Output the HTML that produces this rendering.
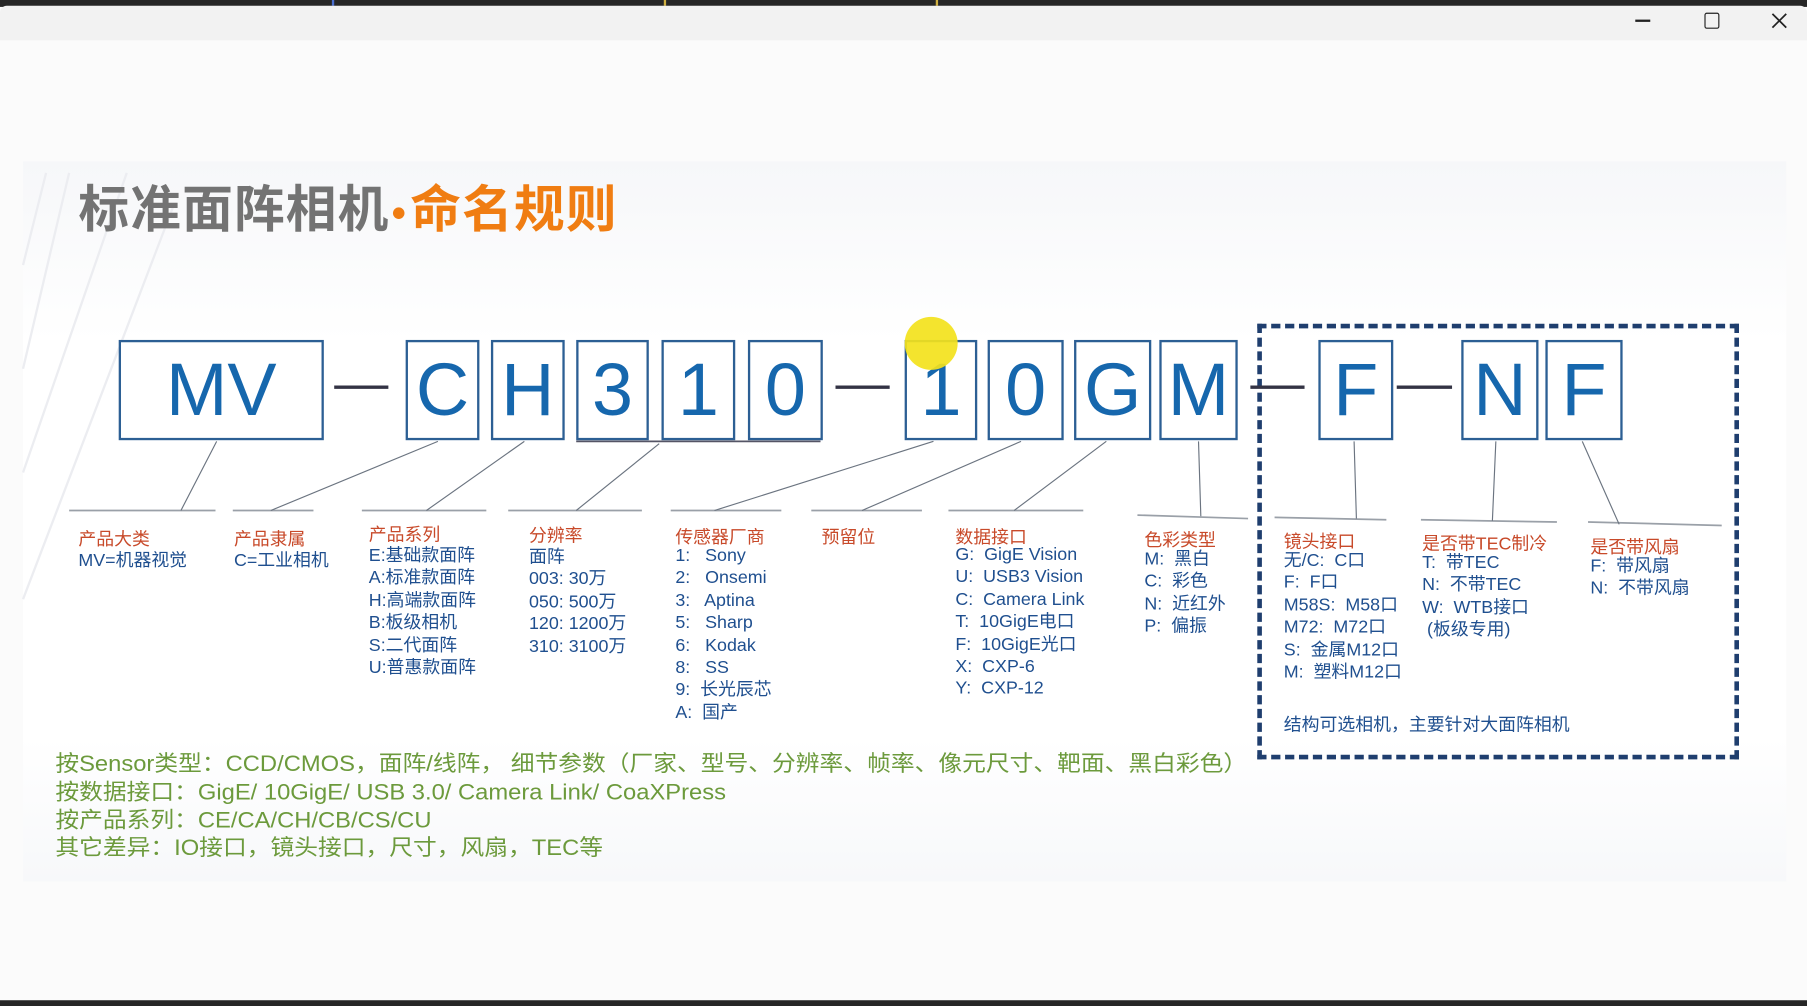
<!DOCTYPE html>
<html><head><meta charset="utf-8"><style>
html,body{margin:0;padding:0;width:1807px;height:1006px;overflow:hidden;background:#fff}
#w{position:absolute;left:0;top:0;width:1568px;height:873px;transform-origin:0 0;transform:scale(1.15242,1.15235);background:#fbfbfb;font-family:"Liberation Sans","Noto Sans CJK SC",sans-serif}
.a{position:absolute;white-space:nowrap}
.t{color:#c84a2a;font-size:15.5px}
.i{color:#1f4f8f;font-size:15.5px;line-height:19.4px}
.g{color:#6c9a3c;font-size:19px;left:48px;transform:scaleX(1.085);transform-origin:0 0}
.bx{position:absolute;top:295px;height:83px;border:2px solid #2c5f94;background:#fff;color:#1667ad;font-size:64px;text-align:center;line-height:83px;box-sizing:content-box}
</style></head><body><div id="w">
<div class="a" style="left:0;top:0;width:1568px;height:6px;background:#262626"></div>
<div class="a" style="left:288px;top:0;width:2px;height:5px;background:#4a6fd0"></div>
<div class="a" style="left:576px;top:0;width:2px;height:5px;background:#d0b040"></div>
<div class="a" style="left:812px;top:0;width:2px;height:5px;background:#d0b040"></div>
<div class="a" style="left:0;top:5px;width:1568px;height:30px;background:#f2f2f2;border-radius:6px 6px 0 0"></div>
<div class="a" style="left:1419px;top:17px;width:13px;height:1.5px;background:#222"></div>
<div class="a" style="left:1479px;top:11px;width:11px;height:12px;border:1.5px solid #222;border-radius:2px"></div>
<svg class="a" style="left:1537px;top:11px" width="14" height="14"><path d="M1 1L13 13M13 1L1 13" stroke="#222" stroke-width="1.5"/></svg>
<div class="a" style="left:20px;top:140px;width:1530px;height:625px;background:linear-gradient(180deg,#f6f7f9 0%,#fff 25%,#fff 80%,#f7f8fa 100%)"></div>
<svg class="a" style="left:0;top:140px" width="1568" height="630">
<path d="M40 10L20 90M60 10L20 180M110 10L20 270M150 40L20 380" stroke="#ecedf1" stroke-width="2" fill="none"/>
</svg>
<div class="a" style="left:68px;top:146px;font-size:44px;font-weight:bold;font-family:'Noto Sans CJK SC',sans-serif;color:#737373;letter-spacing:1px">标准面阵相机<span style="display:inline-block;width:10px;height:10px;border-radius:50%;background:#f07d12;margin:0 5px 0 3px;vertical-align:middle"></span><span style="color:#f07d12">命名规则</span></div>

<div class="a" style="left:1091px;top:281px;width:410px;height:370px;border:4px dashed #1f3e6e"></div>

<div class="bx" style="left:103px;width:174px">MV</div>
<div class="bx" style="left:352px;width:60px">C</div>
<div class="bx" style="left:426px;width:60px">H</div>
<div class="bx" style="left:500px;width:59px">3</div>
<div class="bx" style="left:574px;width:60px">1</div>
<div class="bx" style="left:649px;width:61px">0</div>
<div class="bx" style="left:785px;width:59px">1</div>
<div class="bx" style="left:857px;width:62px">0</div>
<div class="bx" style="left:932px;width:63px">G</div>
<div class="bx" style="left:1006px;width:64px">M</div>
<div class="bx" style="left:1144px;width:61px">F</div>
<div class="bx" style="left:1268px;width:63px">N</div>
<div class="bx" style="left:1341px;width:63px">F</div>
<div class="a" style="left:785px;top:275px;width:46px;height:46px;border-radius:50%;background:#f3e21c;opacity:.92"></div>

<svg class="a" style="left:0;top:0" width="1568" height="873">
<g stroke="#334" stroke-width="3"><path d="M290 336H337M725 336H772M1085 336H1132M1212 336H1260"/></g>
<path d="M500 383H712" stroke="#556" stroke-width="1.5"/>
<g stroke="#9aa0a8" stroke-width="1.5" fill="none">
<path d="M60 443H187M202 443H272M314 443H422M441 443H557M582 443H678M704 443H800M823 443H940M987 447L1083 450M1106 449L1203 451M1233 451L1351 453M1378 453L1494 456"/>
</g>
<g stroke="#6b7480" stroke-width="1" fill="none">
<path d="M188 383L157 443M380 383L235 443M455 383L370 443M572 385L500 443M810 383L620 443M886 383L748 443M960 383L880 443M1040 383L1042 448M1175 383L1177 450M1298 383L1295 452M1373 383L1405 455"/>
</g>
</svg>

<div class="a t" style="left:68px;top:456px">产品大类</div>
<div class="a i" style="left:68px;top:477px">MV=机器视觉</div>
<div class="a t" style="left:203px;top:456px">产品隶属</div>
<div class="a i" style="left:203px;top:477px">C=工业相机</div>
<div class="a t" style="left:320px;top:452px">产品系列</div>
<div class="a i" style="left:320px;top:473px">E:基础款面阵<br>A:标准款面阵<br>H:高端款面阵<br>B:板级相机<br>S:二代面阵<br>U:普惠款面阵</div>
<div class="a t" style="left:459px;top:453px">分辨率</div>
<div class="a i" style="left:459px;top:474px">面阵<br>003: 30万<br>050: 500万<br>120: 1200万<br>310: 3100万</div>
<div class="a t" style="left:586px;top:454px">传感器厂商</div>
<div class="a i" style="left:586px;top:473px">1:&nbsp;&nbsp; Sony<br>2:&nbsp;&nbsp; Onsemi<br>3:&nbsp;&nbsp; Aptina<br>5:&nbsp;&nbsp; Sharp<br>6:&nbsp;&nbsp; Kodak<br>8:&nbsp;&nbsp; SS<br>9:&nbsp; 长光辰芯<br>A:&nbsp; 国产</div>
<div class="a t" style="left:713px;top:454px">预留位</div>
<div class="a t" style="left:829px;top:454px">数据接口</div>
<div class="a i" style="left:829px;top:472px">G:&nbsp; GigE Vision<br>U:&nbsp; USB3 Vision<br>C:&nbsp; Camera Link<br>T:&nbsp; 10GigE电口<br>F:&nbsp; 10GigE光口<br>X:&nbsp; CXP-6<br>Y:&nbsp; CXP-12</div>
<div class="a t" style="left:993px;top:457px">色彩类型</div>
<div class="a i" style="left:993px;top:476px">M:&nbsp; 黑白<br>C:&nbsp; 彩色<br>N:&nbsp; 近红外<br>P:&nbsp; 偏振</div>
<div class="a t" style="left:1114px;top:458px">镜头接口</div>
<div class="a i" style="left:1114px;top:477px">无/C:&nbsp; C口<br>F:&nbsp; F口<br>M58S:&nbsp; M58口<br>M72:&nbsp; M72口<br>S:&nbsp; 金属M12口<br>M:&nbsp; 塑料M12口</div>
<div class="a t" style="left:1234px;top:460px">是否带TEC制冷</div>
<div class="a i" style="left:1234px;top:479px">T:&nbsp; 带TEC<br>N:&nbsp; 不带TEC<br>W:&nbsp; WTB接口<br>&nbsp;(板级专用)</div>
<div class="a t" style="left:1380px;top:463px">是否带风扇</div>
<div class="a i" style="left:1380px;top:482px">F:&nbsp; 带风扇<br>N:&nbsp; 不带风扇</div>
<div class="a i" style="left:1114px;top:620px">结构可选相机，主要针对大面阵相机</div>

<div class="a g" style="top:648px">按Sensor类型：CCD/CMOS，面阵/线阵，&nbsp;细节参数（厂家、型号、分辨率、帧率、像元尺寸、靶面、黑白彩色）</div>
<div class="a g" style="top:673px">按数据接口：GigE/ 10GigE/ USB 3.0/ Camera Link/ CoaXPress</div>
<div class="a g" style="top:697px">按产品系列：CE/CA/CH/CB/CS/CU</div>
<div class="a g" style="top:721px">其它差异：IO接口，镜头接口，尺寸，风扇，TEC等</div>
<div class="a" style="left:0;top:868px;width:1568px;height:5px;background:#262626"></div>
</div></body></html>
